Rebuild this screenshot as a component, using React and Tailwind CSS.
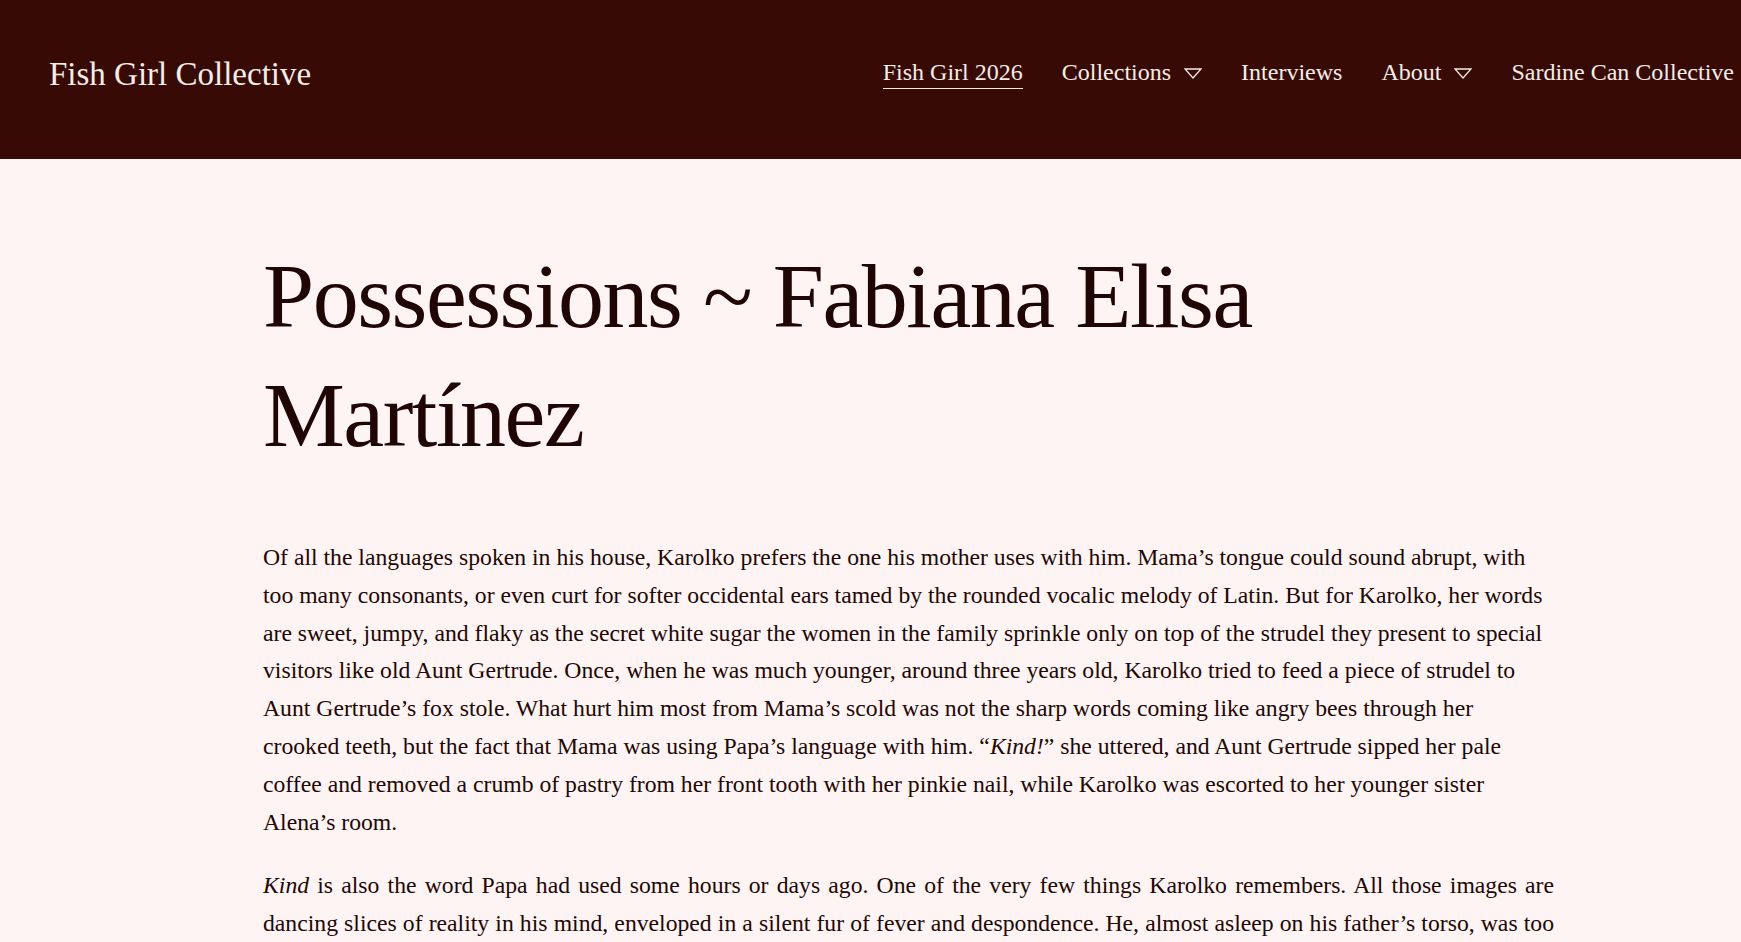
import React from "react";

function Caret() {
  return (
    <svg width="18" height="11" viewBox="0 0 18 11" className="ml-[13px] shrink-0" aria-hidden="true">
      <polygon points="1,1 17,1 9,10" fill="none" stroke="#f6ece6" strokeWidth="1.3" strokeLinejoin="miter" />
    </svg>
  );
}

function NavItem({ children, caret, active }) {
  return (
    <div className="flex items-center">
      <span
        className={
          active
            ? "inline-block leading-[30px] pb-[1px] border-b-[1.5px] border-[#f6ece6]"
            : "inline-block leading-[30px] pb-[2.5px]"
        }
      >
        {children}
      </span>
      {caret ? <Caret /> : null}
    </div>
  );
}

const P1 = [
  "Of all the languages spoken in his house, Karolko prefers the one his mother uses with him. Mama’s tongue could sound abrupt, with",
  "too many consonants, or even curt for softer occidental ears tamed by the rounded vocalic melody of Latin. But for Karolko, her words",
  "are sweet, jumpy, and flaky as the secret white sugar the women in the family sprinkle only on top of the strudel they present to special",
  "visitors like old Aunt Gertrude. Once, when he was much younger, around three years old, Karolko tried to feed a piece of strudel to",
  "Aunt Gertrude’s fox stole. What hurt him most from Mama’s scold was not the sharp words coming like angry bees through her",
];

export default function App() {
  return (
    <div className="min-h-[942px] bg-[#fdf4f3] font-['Liberation_Serif',serif] text-[#220705]">
      <header className="h-[159px] bg-[#370a06] flex items-start text-[#f6ece6]">
        <div className="pl-[49px] pt-[54px] text-[33px] leading-[40px] whitespace-nowrap">Fish Girl Collective</div>
        <nav className="ml-auto pr-[7px] pt-[57px] flex items-start gap-[39px] text-[24px] whitespace-nowrap">
          <NavItem active>Fish Girl 2026</NavItem>
          <NavItem caret>Collections</NavItem>
          <NavItem>Interviews</NavItem>
          <NavItem caret>About</NavItem>
          <NavItem>Sardine Can Collective</NavItem>
        </nav>
      </header>

      <main className="pl-[263px] w-[1554px]">
        <h1 className="mt-[78px] text-[92px] leading-[119px] tracking-[-0.016em] text-[#1f0504] font-normal">
          Possessions ~ Fabiana Elisa
          <br />
          Martínez
        </h1>

        <div className="mt-[64px] text-[23.7px] leading-[37.8px] w-[1291px]">
          <p className="whitespace-nowrap">
            {P1.map((l, i) => (
              <span key={i} className="block">{l}</span>
            ))}
            <span className="block">
              crooked teeth, but the fact that Mama was using Papa’s language with him. “<em>Kind!</em>” she uttered, and Aunt Gertrude sipped her pale
            </span>
            <span className="block">
              coffee and removed a crumb of pastry from her front tooth with her pinkie nail, while Karolko was escorted to her younger sister
            </span>
            <span className="block">Alena’s room.</span>
          </p>
          <p className="mt-[26px] whitespace-nowrap">
            <span className="block text-justify [text-align-last:justify]">
              <em>Kind</em> is also the word Papa had used some hours or days ago. One of the very few things Karolko remembers. All those images are
            </span>
            <span className="block text-justify [text-align-last:justify]">
              dancing slices of reality in his mind, enveloped in a silent fur of fever and despondence. He, almost asleep on his father’s torso, was too
            </span>
          </p>
        </div>
      </main>
    </div>
  );
}
